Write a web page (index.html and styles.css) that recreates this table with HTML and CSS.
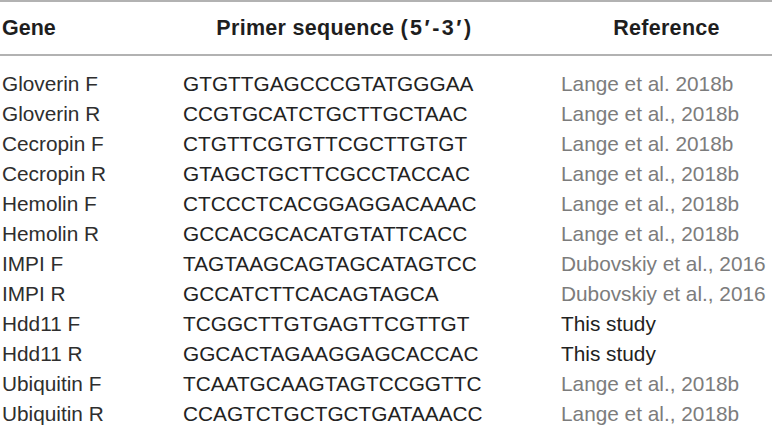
FILE: index.html
```html
<!DOCTYPE html>
<html>
<head>
<meta charset="utf-8">
<link rel="stylesheet" href="styles.css">
</head>
<body>
<div class="table">
  <div class="head">
    <div class="h-gene">Gene</div>
    <div class="h-seq">Primer sequence <span class="paren">(5′-3′)</span></div>
    <div class="h-ref">Reference</div>
  </div>
  <div class="body">
    <div class="row"><div class="gene">Gloverin F</div><div class="seq">GTGTTGAGCCCGTATGGGAA</div><div class="ref link">Lange et al. 2018b</div></div>
    <div class="row"><div class="gene">Gloverin R</div><div class="seq">CCGTGCATCTGCTTGCTAAC</div><div class="ref link">Lange et al., 2018b</div></div>
    <div class="row"><div class="gene">Cecropin F</div><div class="seq">CTGTTCGTGTTCGCTTGTGT</div><div class="ref link">Lange et al. 2018b</div></div>
    <div class="row"><div class="gene">Cecropin R</div><div class="seq">GTAGCTGCTTCGCCTACCAC</div><div class="ref link">Lange et al., 2018b</div></div>
    <div class="row"><div class="gene">Hemolin F</div><div class="seq">CTCCCTCACGGAGGACAAAC</div><div class="ref link">Lange et al., 2018b</div></div>
    <div class="row"><div class="gene">Hemolin R</div><div class="seq">GCCACGCACATGTATTCACC</div><div class="ref link">Lange et al., 2018b</div></div>
    <div class="row"><div class="gene">IMPI F</div><div class="seq">TAGTAAGCAGTAGCATAGTCC</div><div class="ref link">Dubovskiy et al., 2016</div></div>
    <div class="row"><div class="gene">IMPI R</div><div class="seq">GCCATCTTCACAGTAGCA</div><div class="ref link">Dubovskiy et al., 2016</div></div>
    <div class="row"><div class="gene">Hdd11 F</div><div class="seq">TCGGCTTGTGAGTTCGTTGT</div><div class="ref">This study</div></div>
    <div class="row"><div class="gene">Hdd11 R</div><div class="seq">GGCACTAGAAGGAGCACCAC</div><div class="ref">This study</div></div>
    <div class="row"><div class="gene">Ubiquitin F</div><div class="seq">TCAATGCAAGTAGTCCGGTTC</div><div class="ref link">Lange et al., 2018b</div></div>
    <div class="row"><div class="gene">Ubiquitin R</div><div class="seq">CCAGTCTGCTGCTGATAAACC</div><div class="ref link">Lange et al., 2018b</div></div>
  </div>
</div>
</body>
</html>
```

FILE: styles.css
```css
html, body {
  margin: 0;
  padding: 0;
  background: #ffffff;
}

body {
  font-family: "Liberation Sans", Arial, sans-serif;
  width: 772px;
  height: 427px;
  overflow: hidden;
}

.table {
  border-top: 2px solid #b2b2b2;
}

.head {
  display: grid;
  grid-template-columns: 183px 378px 1fr;
  height: 52px;
  line-height: 52px;
  font-size: 21.5px;
  font-weight: bold;
  color: #1e1e1e;
  border-bottom: 2px solid #b2b2b2;
}

.h-gene {
  padding-left: 2px;
}

.h-seq {
  text-align: center;
  padding-right: 54px;
  letter-spacing: 0.3px;
}

.paren {
  letter-spacing: 2.5px;
}

.h-ref {
  text-align: center;
  letter-spacing: 0.3px;
}

.body {
  padding-top: 13px;
}

.row {
  display: grid;
  grid-template-columns: 183px 378px 1fr;
  height: 30px;
  line-height: 30px;
  font-size: 20.8px;
  white-space: nowrap;
}

.gene {
  padding-left: 2px;
  color: #2e2e2e;
}

.seq {
  color: #222222;
}

.ref {
  color: #222222;
}

.ref.link {
  color: #7c7c7c;
}
```
